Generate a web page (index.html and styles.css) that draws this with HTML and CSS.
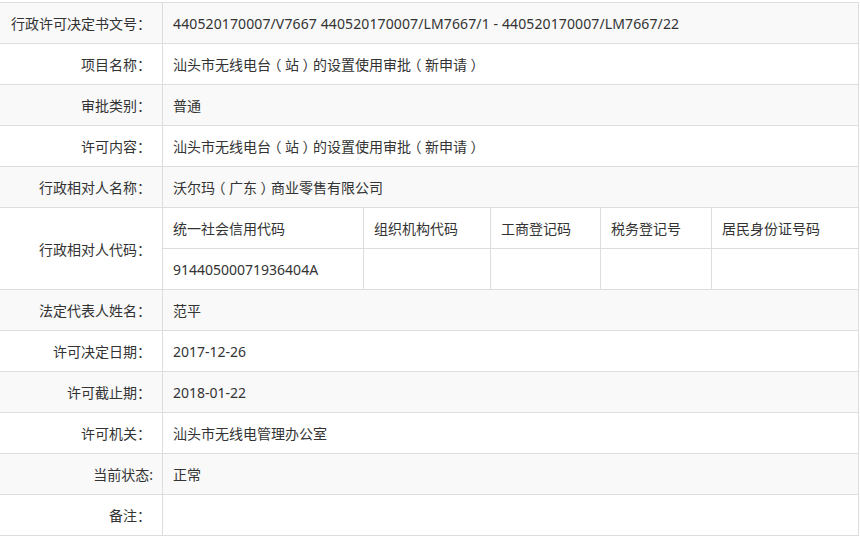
FILE: index.html
```html
<!DOCTYPE html>
<html lang="zh-CN">
<head>
<meta charset="utf-8">
<title>行政许可信息</title>
<link rel="stylesheet" href="styles.css">
</head>
<body>
<table class="info">
  <colgroup>
    <col class="c-label">
    <col class="c1">
    <col class="c2">
    <col class="c3">
    <col class="c4">
    <col class="c5">
  </colgroup>
  <tbody>
    <tr class="alt">
      <th>行政许可决定书文号<span class="pc">：</span></th>
      <td colspan="5" class="num">440520170007/V7667 440520170007/LM7667/1 - 440520170007/LM7667/22</td>
    </tr>
    <tr>
      <th>项目名称<span class="pc">：</span></th>
      <td colspan="5">汕头市无线电台<span class="pr">（</span>站<span class="pr">）</span>的设置使用审批<span class="pr">（</span>新申请<span class="pr">）</span></td>
    </tr>
    <tr class="alt">
      <th>审批类别<span class="pc">：</span></th>
      <td colspan="5">普通</td>
    </tr>
    <tr>
      <th>许可内容<span class="pc">：</span></th>
      <td colspan="5">汕头市无线电台<span class="pr">（</span>站<span class="pr">）</span>的设置使用审批<span class="pr">（</span>新申请<span class="pr">）</span></td>
    </tr>
    <tr class="alt">
      <th>行政相对人名称<span class="pc">：</span></th>
      <td colspan="5">沃尔玛<span class="pr">（</span>广东<span class="pr">）</span>商业零售有限公司</td>
    </tr>
    <tr>
      <th rowspan="2">行政相对人代码<span class="pc">：</span></th>
      <td>统一社会信用代码</td>
      <td>组织机构代码</td>
      <td>工商登记码</td>
      <td>税务登记号</td>
      <td>居民身份证号码</td>
    </tr>
    <tr>
      <td>91440500071936404A</td>
      <td></td>
      <td></td>
      <td></td>
      <td></td>
    </tr>
    <tr class="alt">
      <th>法定代表人姓名<span class="pc">：</span></th>
      <td colspan="5">范平</td>
    </tr>
    <tr>
      <th>许可决定日期<span class="pc">：</span></th>
      <td colspan="5">2017-12-26</td>
    </tr>
    <tr class="alt">
      <th>许可截止期<span class="pc">：</span></th>
      <td colspan="5">2018-01-22</td>
    </tr>
    <tr>
      <th>许可机关<span class="pc">：</span></th>
      <td colspan="5">汕头市无线电管理办公室</td>
    </tr>
    <tr class="alt">
      <th class="ascii">当前状态:</th>
      <td colspan="5">正常</td>
    </tr>
    <tr>
      <th>备注<span class="pc">：</span></th>
      <td colspan="5"></td>
    </tr>
  </tbody>
</table>
</body>
</html>
```

FILE: styles.css
```css
html, body {
  margin: 0;
  padding: 0;
  background: #fff;
}

body {
  padding-top: 2px;
  font-family: "Noto Sans", "Noto Sans CJK SC", sans-serif;
  font-size: 14px;
  color: #333;
}

.info {
  border-collapse: collapse;
  table-layout: fixed;
  width: 860px;
  margin-left: -1px;
}

.c-label { width: 163px; }
.c1 { width: 201px; }
.c2 { width: 127px; }
.c3 { width: 110px; }
.c4 { width: 111px; }
.c5 { width: 147px; }

.info th,
.info td {
  border: 1px solid #ddd;
  height: 40px;
  padding: 0 10px;
  vertical-align: middle;
  white-space: nowrap;
  font-weight: normal;
}

.info th {
  text-align: right;
  padding-right: 11px;
}

.info th.ascii {
  padding-right: 9px;
}

.info td {
  text-align: left;
}

.info td.num {
  letter-spacing: 0.12px;
}

.info tr.alt {
  background: #f9f9f9;
}

.pc {
  font-family: "Noto Sans CJK TC", "Noto Sans CJK SC", sans-serif;
}

.pr {
  display: inline-block;
  width: 1em;
  text-align: center;
  font-family: "Noto Sans CJK SC", sans-serif;
  font-feature-settings: "halt" 1;
}
```
